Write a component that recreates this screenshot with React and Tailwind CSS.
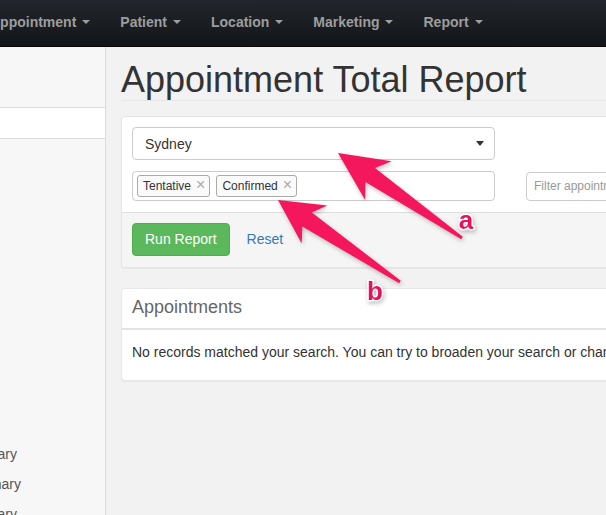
import React from "react";

const navItems = ["Appointment", "Patient", "Location", "Marketing", "Report"];

// builds a tapered arrow polygon from tip to tail
const arrowPoints = (tip, tail, headLen, headHalf, neckBack, neckHalf, tailHalf) => {
  const dx = tail[0] - tip[0];
  const dy = tail[1] - tip[1];
  const len = Math.hypot(dx, dy);
  const ux = dx / len;
  const uy = dy / len;
  const nx = -uy;
  const ny = ux;
  const P = (a, b) => [tip[0] + ux * a + nx * b, tip[1] + uy * a + ny * b];
  const pts = [
    P(0, 0),
    P(headLen, headHalf),
    P(neckBack, neckHalf),
    [tail[0] + nx * tailHalf, tail[1] + ny * tailHalf],
    [tail[0] - nx * tailHalf, tail[1] - ny * tailHalf],
    P(neckBack, -neckHalf),
    P(headLen, -headHalf),
  ];
  return pts.map((p) => p.map((v) => v.toFixed(1)).join(",")).join(" ");
};

const Caret = ({ className = "" }) => (
  <span
    className={`inline-block w-0 h-0 border-t-[4px] border-x-[4px] border-x-transparent align-middle ${className}`}
  />
);

const Tag = ({ label, className = "" }) => (
  <span
    className={`flex items-center h-[22px] border border-[#aaa] rounded-[3px] bg-[#fafafa] pl-[5px] pr-[4px] text-[12px] text-[#333] ${className}`}
  >
    {label}
    <span className="ml-[5px] text-[16px] leading-none text-[#aaa] -mt-[2px]">×</span>
  </span>
);

export default function App() {
  return (
    <div className="relative w-[606px] h-[515px] overflow-hidden bg-[#f2f2f2] font-['Liberation_Sans',Arial,sans-serif]">
      {/* Navbar */}
      <div className="h-[47px] bg-gradient-to-b from-[#22262c] to-[#121519] border-b border-[#080808] flex items-center pb-[2px]">
        <ul className="flex items-center ml-[-25px]">
          {navItems.map((item) => (
            <li
              key={item}
              className="px-[15px] text-[14px] font-bold text-[#9d9d9d] whitespace-nowrap flex items-center"
            >
              {item}
              <Caret className="ml-[6px] border-t-[#9d9d9d]" />
            </li>
          ))}
        </ul>
      </div>

      <div className="flex h-[468px]">
        {/* Sidebar */}
        <div className="w-[106px] shrink-0 bg-[#f7f7f7] border-r border-[#dcdcdc] overflow-hidden">
          <div className="h-[60px]" />
          <div className="h-[32px] bg-white border-y border-[#ddd]" />
          <div className="mt-[300px] text-[14px] text-[#555] whitespace-nowrap">
            <div className="h-[30px] leading-[30px] ml-[-43px]">Summary</div>
            <div className="h-[30px] leading-[30px] ml-[-49px]">Preliminary</div>
            <div className="h-[30px] leading-[30px] ml-[-43px]">Summary</div>
          </div>
        </div>

        {/* Main */}
        <div className="flex-1 min-w-0 overflow-hidden pl-[15px]">
          <div className="w-[720px]">
            <h1 className="mt-[13px] text-[36px] leading-[1.1] text-[#333] whitespace-nowrap border-b border-[#e6e6e6]">
              Appointment Total Report
            </h1>

            {/* Filters panel */}
            <div className="mt-[15px] bg-white border border-[#e4e4e4] rounded-[4px] shadow-[0_1px_1px_rgba(0,0,0,0.05)]">
              <div className="pt-[10px] px-[10px] pb-[11px] flex">
                <div className="w-[363px] flex flex-col gap-[11px]">
                  <div className="h-[33px] border border-[#ccc] rounded-[4px] flex items-center justify-between pl-[12px] pr-[10px] text-[14px] text-[#333]">
                    <span className="mt-[2px]">Sydney</span>
                    <Caret className="border-t-[5px] border-t-[#333]" />
                  </div>
                  <div className="h-[30px] border border-[#ccc] rounded-[4px] flex items-center px-[4px]">
                    <Tag label="Tentative" />
                    <Tag label="Confirmed" className="ml-[6px]" />
                  </div>
                </div>
                <div className="ml-[31px] flex-1 flex flex-col gap-[11px]">
                  <div className="h-[33px]" />
                  <div className="h-[29px] mt-[1px] border border-[#ccc] rounded-[4px] flex items-center pl-[7px] text-[12px] text-[#999] whitespace-nowrap">
                    Filter appointments by status
                  </div>
                </div>
              </div>
              <div className="border-t border-[#ddd] bg-[#f5f5f5] pt-[10px] px-[10px] pb-[11px] flex items-center rounded-b-[4px]">
                <button className="h-[33px] px-[12px] bg-[#5cb85c] border border-[#4cae4c] rounded-[4px] text-white text-[14px]">
                  Run Report
                </button>
                <span className="ml-[5px] px-[12px] text-[14px] text-[#337ab7]">Reset</span>
              </div>
            </div>

            {/* Results panel */}
            <div className="mt-[20px] bg-white border border-[#e8e8e8] rounded-[4px] shadow-[0_1px_1px_rgba(0,0,0,0.05)]">
              <div className="pt-[9px] pb-[11px] px-[10px] border-b-2 border-[#e3e3e3] text-[18px] leading-[1.1] text-[#666]">
                Appointments
              </div>
              <div className="pt-[12px] pb-[18px] px-[10px] text-[14px] leading-[20px] text-[#333] whitespace-nowrap">
                No records matched your search. You can try to broaden your search or change the filters.
              </div>
            </div>
          </div>
        </div>
      </div>

      {/* Annotation arrows */}
      <svg
        className="absolute inset-0 pointer-events-none drop-shadow-[1px_2px_2px_rgba(0,0,0,0.25)]"
        width="606"
        height="515"
        viewBox="0 0 606 515"
      >
        <polygon
          fill="#f5175e"
          points={arrowPoints([338, 153], [462, 238], 49, 23.5, 39, 8.5, 1.5)}
        />
        <polygon
          fill="#f5175e"
          points={arrowPoints([278, 200], [400, 282], 44, 23, 35, 8.5, 1.5)}
        />
        <text
          x="466"
          y="229"
          textAnchor="middle"
          fontFamily="Liberation Sans, Arial, sans-serif"
          fontWeight="bold"
          fontSize="26"
          fill="#e8125a"
          stroke="#fff"
          strokeWidth="3"
          paintOrder="stroke"
        >
          a
        </text>
        <text
          x="375"
          y="300"
          textAnchor="middle"
          fontFamily="Liberation Sans, Arial, sans-serif"
          fontWeight="bold"
          fontSize="26"
          fill="#e8125a"
          stroke="#fff"
          strokeWidth="3"
          paintOrder="stroke"
        >
          b
        </text>
      </svg>
    </div>
  );
}
